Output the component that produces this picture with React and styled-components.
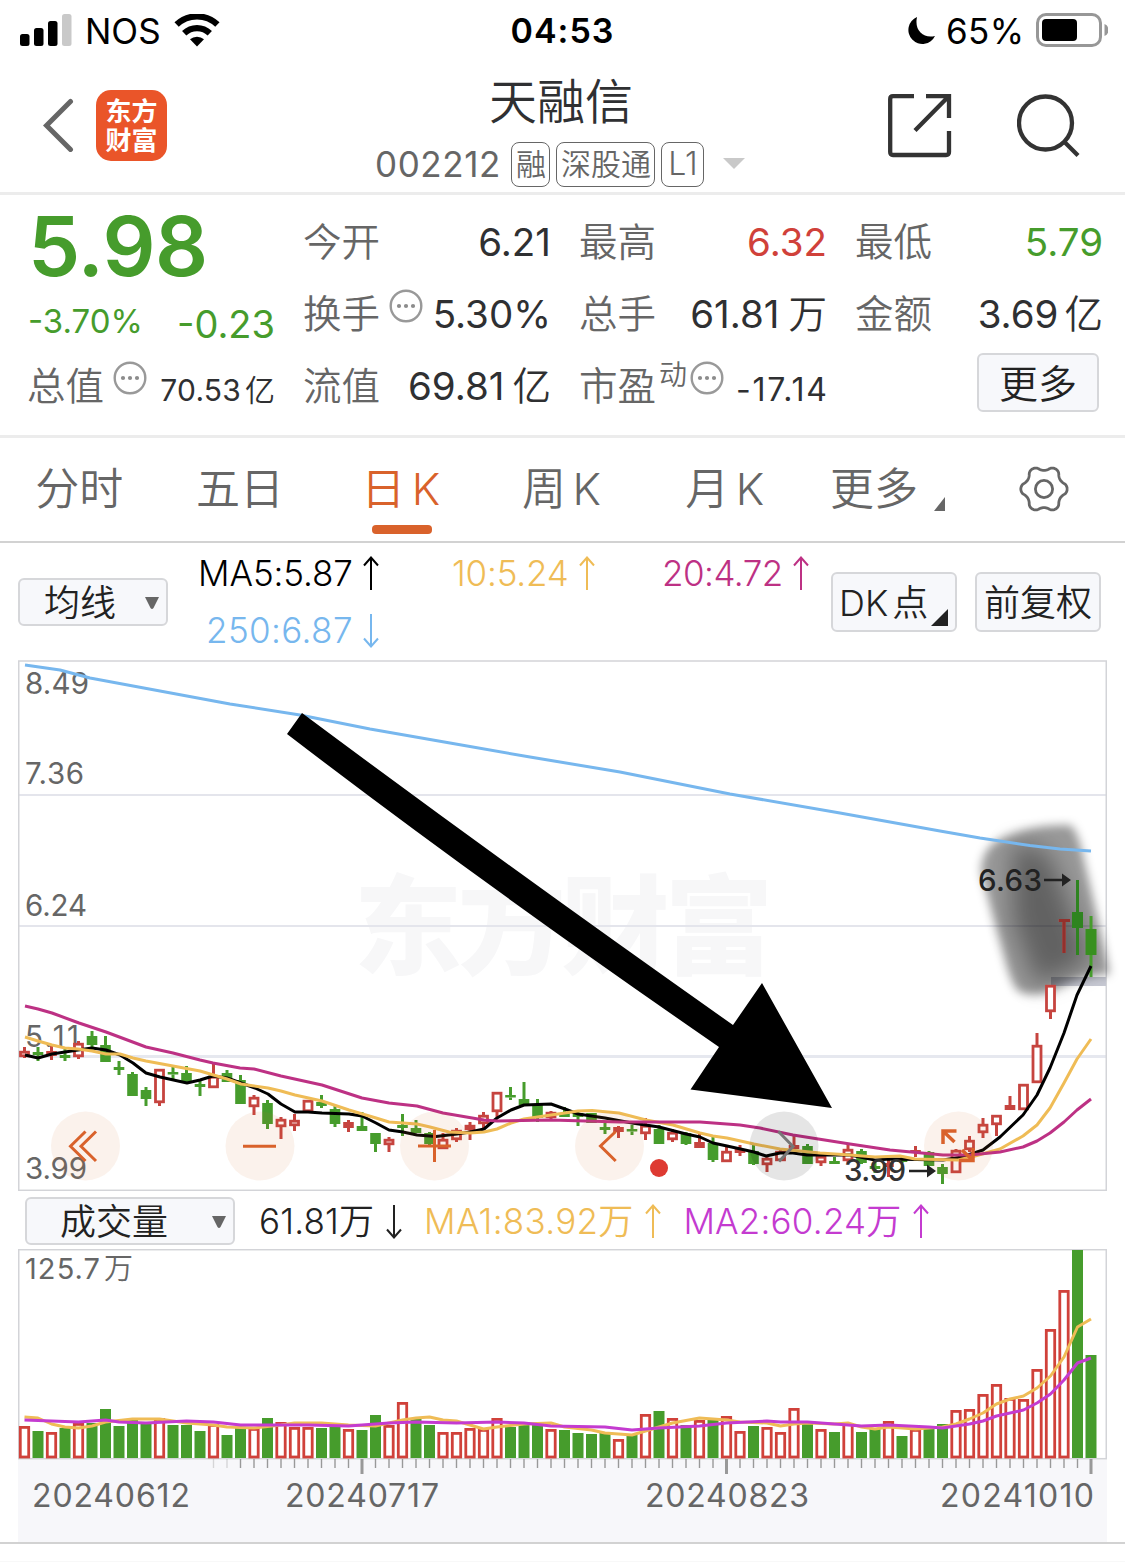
import React from 'react'
import styled, { createGlobalStyle, css } from 'styled-components'

const colors = {
  green: '#469c2c',
  red: '#d0413a',
  orange: '#d9622b',
  text: '#2f3032',
  label: '#666',
  yellow: '#efbc56',
  magenta: '#bd3184',
  purple: '#c43bd0',
  blue: '#77b7ee',
  line: '#ececec',
  border: '#d6d7da',
  panel: '#f7f8fb',
}

const GlobalStyle = createGlobalStyle`
  * { box-sizing: border-box; }
  body {
    margin: 0;
    background: #fff;
    color: ${colors.text};
    font-family: Inter, 'Noto Sans CJK SC', sans-serif;
    font-weight: 400;
  }
  svg { display: block; }
`

const Page = styled.div`
  width: 1125px;
  height: 1562px;
  overflow: hidden;
  background: #fff;
`

const Txt = styled.span`
  display: inline-block;
  white-space: nowrap;
  line-height: 1;
  font-size: ${props => props.$size}px;
  font-weight: ${props => props.$weight || 400};
  color: ${props => props.$color || 'inherit'};
  letter-spacing: ${props => props.$track || 0}px;
  margin-top: ${props => props.$drop || 0}px;
  margin-right: ${props => -(props.$track || 0)}px;
`

const Unit = styled.span`
  margin-left: ${props => props.$gap}px;
  font-weight: 350;
`

/* status bar */

const StatusBar = styled.div`
  display: grid;
  grid-template-columns: 1fr auto 1fr;
  align-items: center;
  height: 62px;
  padding: 0 17px 0 20px;
  color: #000;
`

const StatusSide = styled.div`
  display: flex;
  align-items: center;
  gap: ${props => (props.$end ? 10 : 13)}px;
  justify-content: ${props => (props.$end ? 'flex-end' : 'flex-start')};
`

const Clock = styled(Txt)`
  padding-right: 4px;
`

/* header */

const Header = styled.header`
  display: grid;
  grid-template-columns: 375px 1fr 375px;
  height: 133px;
  border-bottom: 3px solid ${colors.line};
`

const HeaderSide = styled.div`
  display: flex;
  align-items: center;
  height: ${props => (props.$end ? 127 : 126)}px;
  padding: ${props => (props.$end ? '0 45px 0 0' : '0 0 0 43px')};
  justify-content: ${props => (props.$end ? 'flex-end' : 'flex-start')};
  gap: ${props => (props.$end ? 65 : 22)}px;
`

const Logo = styled.div`
  width: 71px;
  height: 71px;
  padding-top: 7px;
  border-radius: 15px;
  background: #ea5529;
  color: #fff;
  font-size: 26px;
  font-weight: 700;
  line-height: 29px;
  text-align: center;
`

const TitleBlock = styled.div`
  display: flex;
  flex-direction: column;
  align-items: flex-start;
`

const Title = styled.h1`
  margin: 13px 0 0 114px;
  font-size: 48px;
  line-height: 54px;
  font-weight: 350;
`

const SubTitle = styled.div`
  display: flex;
  align-items: center;
  margin-top: 12px;
  height: 46px;
  color: ${colors.label};
`

const Tags = styled.div`
  display: flex;
  gap: 6px;
  margin: 0 19px 0 11px;
`

const Tag = styled.span`
  display: flex;
  align-items: center;
  justify-content: center;
  width: ${props => props.$w}px;
  height: 45px;
  border: 1.5px solid #666;
  border-radius: 8px;
  font-size: ${props => props.$size || 30}px;
  font-weight: 350;
  line-height: 1;
  white-space: nowrap;
`

/* quote */

const Quote = styled.section`
  display: grid;
  grid-template-columns: repeat(4, 247px);
  grid-template-rows: repeat(3, 72px);
  column-gap: 29px;
  height: 243px;
  padding: 11px 0 0 28px;
  border-bottom: 3px solid ${colors.line};
`

const Cell = styled.div`
  display: flex;
  align-items: center;
  justify-content: space-between;
  height: 72px;
`

const MoreCell = styled(Cell)`
  justify-content: flex-end;
  padding: 0 4px 8px 0;
`

const Label = styled.span`
  display: flex;
  align-items: center;
  margin-left: -1px;
  color: ${colors.label};
  font-size: 38.5px;
  font-weight: 350;
  line-height: 1;
  white-space: nowrap;
`

const Super = styled.span`
  margin: -22px 0 0 3px;
  font-size: 28px;
`

const DotsWrap = styled.span`
  margin: -16px 0 0 ${props => props.$gap}px;
`

const Button = styled.button`
  display: flex;
  align-items: center;
  justify-content: center;
  width: ${props => props.$w}px;
  height: ${props => props.$h}px;
  padding: 2px 0 0;
  border: 2px solid ${colors.border};
  border-radius: 6px;
  background: ${colors.panel};
  color: #222;
  font: 350 ${props => props.$size || 37}px/1 Inter, 'Noto Sans CJK SC', sans-serif;
  white-space: nowrap;
`

/* tabs */

const Tabs = styled.nav`
  display: grid;
  grid-template-columns: repeat(7, 1fr);
  height: 105px;
  border-bottom: 2px solid #d2d2d2;
`

const Tab = styled.div`
  position: relative;
  display: flex;
  align-items: center;
  justify-content: center;
  padding: 0 ${props => (props.$shift ? 0 : 2)}px 1px ${props => props.$shift || 0}px;
  color: ${colors.label};
  font-size: 44px;
  font-weight: 350;
  line-height: 1;
  white-space: nowrap;
  word-spacing: -6px;

  ${props => props.$active && css`
    color: ${colors.orange};

    &:after {
      content: '';
      position: absolute;
      left: 50%;
      bottom: 7px;
      width: 60px;
      height: 9px;
      margin-left: -30px;
      border-radius: 4px;
      background: ${colors.orange};
    }
  `}
`

/* indicator rows */

const IndicatorRow = styled.div`
  display: flex;
  height: 117px;
  padding: 0 24px 0 18px;
`

const Averages = styled.div`
  display: grid;
  grid-template-columns: 254px 210px 169px;
  grid-template-rows: 57px 57px;
  width: 633px;
  margin: 2px 0 0 30px;
`

const Average = styled.div`
  display: flex;
  align-items: center;
  gap: 10px;
  padding-left: ${props => props.$indent || 0}px;
  color: ${props => props.$color};
`

const Select = styled(Button)`
  justify-content: space-between;
  padding: 2px ${props => props.$right}px 0 ${props => props.$left}px;
  margin-top: ${props => props.$top}px;
`

const ButtonPair = styled.div`
  display: flex;
  gap: 18px;
  margin-top: 29px;
`

const DkButton = styled(Button)`
  position: relative;
  justify-content: flex-start;
  padding-left: 6px;
  word-spacing: -6px;

  &:after {
    content: '';
    position: absolute;
    right: 7px;
    bottom: 4px;
    border-style: solid;
    border-width: 0 0 17px 17px;
    border-color: transparent transparent #222 transparent;
  }
`

const VolumeRow = styled.div`
  display: flex;
  align-items: center;
  height: 58px;
  padding-left: 25px;
`

const VolumeItem = styled(Average)`
  margin: 2px 0 0 ${props => props.$ml}px;
  gap: 12px;
`

const Footer = styled.div`
  height: 20px;
  border-top: 2px solid #d2d2d2;
  border-bottom: 1px solid #f8f8f8;
`

/* icons */

const Dots = ({ gap }) => (
  <DotsWrap $gap={gap}>
    <svg width="34" height="34" viewBox="0 0 34 34">
      <circle cx="17" cy="17" r="15.3" fill="none" stroke="#999" strokeWidth="2.4" />
      {[10, 17, 24].map(x => <circle key={x} cx={x} cy="17" r="2.1" fill="#8c8c8c" />)}
    </svg>
  </DotsWrap>
)

const Arrow = ({ down }) => (
  <svg width="16" height="35" viewBox="0 0 16 35" fill="none" stroke="currentColor" strokeWidth="2">
    <path d={down ? 'M8 1v32M1 25.500l7 8 7-8' : 'M8 34V2M1 9.500l7-8 7 8'} />
  </svg>
)

const Caret = () => (
  <svg width="14" height="12" viewBox="0 0 14 12"><path d="M0 0h14L8.500 11q-1.500 2-3 0z" fill="#666" /></svg>
)

const gearPath = Array.from({ length: 121 }, (_, i) => {
  const a = (i * Math.PI) / 60
  const wave = Math.cos(6 * a)
  const r = 20.9 + 2.3 * Math.sign(wave) * Math.pow(Math.abs(wave), 0.75)
  return `${i ? 'L' : 'M'}${(26 + r * Math.cos(a)).toFixed(2)} ${(26 + r * Math.sin(a)).toFixed(2)}`
}).join('')

const Gear = () => (
  <svg width="52" height="52" viewBox="0 0 52 52" fill="none" stroke="#666" strokeWidth="2.8">
    <path d={gearPath} strokeLinejoin="round" />
    <circle cx="26" cy="26" r="8.600" />
  </svg>
)

const Signal = () => (
  <svg width="52" height="34" viewBox="0 0 52 34">
    <rect x="0" y="20" width="9.500" height="12" rx="2.5" />
    <rect x="14" y="14" width="9.500" height="18" rx="2.5" />
    <rect x="28" y="7" width="9.500" height="25" rx="2.5" />
    <rect x="42" y="0" width="9.500" height="32" rx="2.5" fill="#c9c9c9" />
  </svg>
)

const Wifi = () => (
  <svg width="46" height="34" viewBox="0 0 46 34" fill="none" stroke="#000" strokeWidth="6.200">
    <path d="M2.600 10.600a29.500 29.500 0 0 1 40.800 0" />
    <path d="M10.200 19.200a18.500 18.500 0 0 1 25.600 0" />
    <path d="M23 32.500l-7-7.200a10.500 10.500 0 0 1 14 0z" fill="#000" stroke="none" />
  </svg>
)

const Battery = () => (
  <svg width="74" height="36" viewBox="0 0 74 36">
    <rect x="3.500" y="1.500" width="63" height="31" rx="8.500" fill="none" stroke="#979797" strokeWidth="3" />
    <rect x="8" y="6" width="35" height="22" rx="4" />
    <path d="M70.500 11q4 1.500 4 6t-4 6z" fill="#979797" />
  </svg>
)

/* chart data: [high, body top, body bottom, low, type], r = hollow, s = solid red, g = green */

const candles = [
  [1047, 1051, 1057, 1058, 'r'], [1047, 1052, 1055, 1061, 'g'], [1046, 1051, 1056, 1060, 's'], [1047, 1055, 1058, 1061, 'g'],
  [1041, 1043, 1057, 1059, 'r'], [1031, 1036, 1045, 1047, 'g'], [1036, 1045, 1062, 1062, 'g'], [1061, 1067, 1070, 1075, 'g'],
  [1072, 1074, 1096, 1096, 'g'], [1087, 1090, 1099, 1106, 'g'], [1069, 1069, 1103, 1106, 'r'], [1065, 1072, 1074.5, 1079, 'g'],
  [1066, 1073, 1083, 1083, 'g'], [1081, 1084, 1087, 1096, 'g'], [1064, 1076, 1088, 1088, 'r'], [1070, 1073, 1082, 1082, 'g'],
  [1075, 1080, 1104, 1104, 'g'], [1095, 1097, 1107, 1115, 'r'], [1100, 1103, 1124, 1129, 'g'], [1117, 1119, 1127, 1139, 'r'],
  [1114, 1120, 1126, 1131, 'r'], [1100, 1100, 1112, 1112, 'r'], [1095, 1102, 1106, 1108, 'g'], [1106, 1109, 1124, 1127, 'g'],
  [1120, 1122, 1128, 1132, 's'], [1112, 1126, 1131, 1131, 'g'], [1133, 1133, 1144, 1152, 'g'], [1137, 1139, 1145, 1152, 'r'],
  [1114, 1125, 1128, 1136, 'g'], [1120, 1128, 1133, 1133, 'g'], [1132, 1133, 1144, 1145, 'g'], [1133, 1139, 1149, 1149, 'r'],
  [1128, 1130, 1140, 1142, 'r'], [1122, 1125, 1130, 1140, 'r'], [1112, 1115, 1124, 1130, 'r'], [1092, 1092, 1112, 1117, 'r'],
  [1087, 1095, 1097.5, 1100, 'g'], [1082, 1099, 1105, 1105, 'g'], [1099, 1105, 1118, 1122, 'g'], [1111, 1112, 1118, 1120, 'r'],
  [1107, 1113, 1117, 1117, 'g'], [1112, 1113, 1117, 1126, 'g'], [1113, 1113, 1123, 1123, 'g'], [1123, 1127, 1130, 1134, 'g'],
  [1126, 1127, 1132, 1138, 's'], [1125, 1129, 1131.5, 1135, 'g'], [1118, 1125, 1134, 1140, 'r'], [1125, 1129, 1144, 1144, 'g'],
  [1129, 1132, 1140, 1142, 'r'], [1132, 1133, 1144, 1145, 'g'], [1133, 1142, 1148, 1148, 's'], [1136, 1143, 1160, 1162, 'g'],
  [1145, 1151, 1162, 1162, 'r'], [1145, 1149, 1153, 1156, 's'], [1145, 1151, 1164, 1165, 'g'], [1156, 1158, 1165, 1172, 'r'],
  [1150, 1151, 1161, 1161, 'r'], [1136, 1145, 1149, 1149, 's'], [1144, 1146, 1164, 1164, 'g'], [1154, 1156, 1163, 1166, 'r'],
  [1157, 1161, 1164, 1164, 'g'], [1144, 1149, 1161, 1163, 'r'], [1149, 1151, 1163, 1164, 'g'], [1162, 1166, 1169, 1173, 'g'],
  [1158, 1163, 1167, 1177, 's'], [1157, 1158, 1162, 1163, 'g'], [1146, 1150, 1153, 1157, 's'], [1151, 1152, 1166, 1166, 'g'],
  [1164, 1167, 1174, 1184, 'g'], [1149, 1150, 1173, 1173, 'r'], [1136, 1140, 1150, 1152, 'r'], [1118, 1124, 1133, 1138, 'r'],
  [1115, 1115, 1125, 1136, 'r'], [1096, 1105, 1110, 1110, 's'], [1084, 1084, 1110, 1110, 'r'], [1033, 1045, 1083, 1083, 'r'],
  [985, 985, 1012, 1019, 'r'], [919, 919, 922, 953, 's'], [880, 912, 928, 955, 'g'], [916, 929, 955, 977, 'g'],
]

const volumes = [
  1426, 1431, 1432, 1428, 1423, 1423, 1409, 1426, 1419, 1423, 1418, 1425, 1425, 1431, 1424, 1435, 1428, 1428, 1418, 1422,
  1427, 1427, 1428, 1427, 1429, 1430, 1415, 1425, 1402, 1419, 1425, 1432, 1432, 1428, 1429, 1418, 1427, 1425, 1425, 1429,
  1430, 1433, 1434, 1433, 1439, 1435, 1414, 1411, 1418, 1425, 1420, 1420, 1416, 1431, 1426, 1427, 1432, 1408, 1424, 1429,
  1432, 1423, 1432, 1429, 1421, 1436, 1429, 1429, 1424, 1410, 1409, 1394, 1384, 1398, 1399, 1369, 1329, 1290, 1250, 1355,
]

// day 28 closed above its previous close, so its volume is red under a green candle
const isDown = i => candles[i][4] === 'g' && i !== 28

const ma5 = '25,1055 38,1058 52,1054 78,1050 92,1048 106,1050 120,1055 133,1063 146,1073 160,1077 187,1083 200,1080 213,1076 227,1078 241,1083 255,1088 268,1094 281,1104 295,1112 308,1112 322,1113 349,1114 362,1116 376,1123 389,1130 403,1132 417,1135 436,1136.5 457,1134 470,1132 484,1129 497,1118 511,1110 524,1105 551,1104 565,1109 578,1114 605,1118 632,1123 659,1127 686,1134 700,1137 713,1143 727,1146 754,1152 766,1156 780,1153 793,1153 807,1155 850,1155 875,1160 890,1159 943,1160 962,1157 983,1150 1000,1137 1023,1115 1037,1095 1050,1068 1064,1033 1077,995 1091,966'
const ma10 = '25,1037 38,1041 52,1045 65,1048 78,1049 92,1051 106,1054 120,1054 133,1058 146,1061 173,1066 200,1071 227,1079 241,1084 268,1088 281,1091 295,1095 322,1101 349,1110 376,1118 389,1122 417,1124 430,1127 449,1132 470,1133 484,1132 497,1129 511,1123 524,1119 551,1115 565,1113 578,1111 592,1110.5 619,1113 646,1120 673,1125 700,1133 713,1136 727,1138 754,1144 780,1149 820,1153 850,1155 875,1157 900,1156 915,1159 958,1160 975,1156 1000,1149 1023,1136 1037,1125 1050,1108 1064,1083 1077,1059 1091,1039'
const ma20 = '25,1006 38,1009 52,1013 79,1023 106,1032 146,1047 173,1053 200,1060 213,1063 240,1068 254,1069 281,1076 322,1085 362,1098 389,1103 417,1106 443,1113 484,1120 497,1121 551,1120 620,1122 700,1122 740,1125 760,1128 793,1135 850,1144 890,1150 943,1155 970,1155 1000,1152 1023,1147 1037,1141 1050,1133 1064,1122 1077,1110 1091,1099'
const ma250 = '25,665 60,670 90,678 160,691 230,704 300,715 370,729 450,743 530,757 620,772 730,794 840,813 940,831 980,838 1030,845.500 1060,849 1091,851'

// volume averages as [index, y]
const vma1 = [[0, 1417], [1, 1418], [2, 1424], [3, 1427], [4, 1428], [5, 1426], [6, 1422], [8, 1419], [10, 1419], [12, 1423], [14, 1425], [15, 1427], [17, 1428], [19, 1425], [20, 1423], [22, 1423], [24, 1425], [26, 1426], [27, 1423], [28, 1420], [29, 1418], [30, 1417], [31, 1420], [32, 1421], [33, 1425], [34, 1429], [35, 1427], [37, 1424], [39, 1423], [40, 1427], [42, 1430], [43, 1433], [45, 1435], [46, 1431], [47, 1427], [48, 1423], [50, 1418], [52, 1420], [53, 1422], [55, 1423], [56, 1426], [57, 1424], [58, 1423], [60, 1424], [61, 1423], [62, 1427], [63, 1429], [64, 1427], [66, 1429], [68, 1427], [69, 1424], [70, 1419], [71, 1413], [72, 1404], [73, 1399], [74, 1396], [75, 1388], [76, 1376], [77, 1357], [78, 1327], [79, 1319]]
const vma2 = [[0, 1420], [2, 1421], [4, 1422], [6, 1420], [7, 1422], [9, 1423], [12, 1421], [14, 1422], [16, 1425], [21, 1425], [24, 1426], [27, 1423], [29, 1422], [32, 1423], [35, 1422], [37, 1423], [39, 1426], [43, 1427], [45, 1430], [47, 1428], [50, 1426], [52, 1423], [55, 1421], [56, 1422], [58, 1422], [60, 1424], [62, 1426], [64, 1425], [67, 1427], [68, 1428], [70, 1424], [71, 1421], [72, 1416], [74, 1410], [75, 1403], [76, 1394], [77, 1380], [78, 1363], [79, 1358]]

const px = i => 24.5 + 13.5 * i
const toPoints = list => list.map(([i, y]) => `${px(i)},${y}`).join(' ')

const Candle = ({ x, data: [hi, top, bottom, lo, type] }) => {
  const color = type === 'g' ? colors.green : '#c6443f'
  return (
    <g>
      <path d={`M${x} ${hi}V${top}M${x} ${bottom}V${lo}`} stroke={color} strokeWidth="3" />
      {type === 'r'
        ? <rect x={x - 4} y={top + 1.2} width="8" height={bottom - top - 2.4} fill="#fff" stroke={color} strokeWidth="2.8" />
        : <rect x={x - 5.3} y={top} width="10.600" height={bottom - top} fill={color} />}
    </g>
  )
}

const ChartText = ({ x, y, w, size = 29.5, fill = '#666', weight = 400, children }) => (
  <text x={x} y={y} textLength={w} fontSize={size} fill={fill} fontWeight={weight}>{children}</text>
)

const PriceChart = () => (
  <svg width="1125" height="531" viewBox="0 660 1125 531">
    <defs>
      <filter id="soft" x="-30%" y="-30%" width="160%" height="160%"><feGaussianBlur stdDeviation="5" /></filter>
      <filter id="softer" x="-60%" y="-60%" width="220%" height="220%"><feGaussianBlur stdDeviation="12" /></filter>
    </defs>
    <text x="354" y="966" textLength="419" fontSize="108" fontWeight="900" fill="#f7f7f8">东方财富</text>
    <path d="M19 795H1106M19 926H1106" stroke="#e4e5ec" strokeWidth="2" />
    <path d="M19 1056.500H1106" stroke="#e6e8ef" strokeWidth="3" />
    <rect x="18.750" y="661" width="1087.500" height="529.300" fill="none" stroke="#d3d4d8" strokeWidth="1.500" />
    <rect x="1051" y="977" width="55" height="9" fill="#c6c8d2" />

    <ChartText x="25" y="694" w="64">8.49</ChartText>
    <ChartText x="25" y="784" w="59">7.36</ChartText>
    <ChartText x="25" y="916" w="62">6.24</ChartText>
    <ChartText x="25" y="1047" w="54">5.11</ChartText>
    <ChartText x="25" y="1179" w="62">3.99</ChartText>

    <g filter="url(#soft)">
      <path d="M981 872Q981 848 1002 838Q1032 824 1070 825Q1078 830 1084 860Q1096 910 1110 974Q1078 976 1054 990Q1034 998 1020 992Q1012 988 1004 956Q990 906 981 872Z" fill="#000" opacity=".4" />
    </g>
    <g filter="url(#softer)">
      <path d="M1012 846Q1036 842 1050 856L1068 900L1090 962L1036 986L1012 920Z" fill="#000" opacity=".36" />
    </g>

    {candles.map((c, i) => <Candle key={i} x={px(i)} data={c} />)}
    <path d="M1064 919V953M1059 920.500H1070" stroke="#93302c" strokeWidth="3" />
    <path d="M1077.500 880V955" stroke="#2f8420" strokeWidth="3" />
    <rect x="1072" y="912" width="11" height="16" fill="#2f8420" />
    <rect x="1085.700" y="929" width="10.600" height="26" fill="#38901f" />

    <g fill="none" strokeWidth="3" strokeLinejoin="round">
      <polyline points={ma250} stroke={colors.blue} />
      <polyline points={ma5} stroke="#000" />
      <polyline points={ma10} stroke={colors.yellow} />
      <polyline points={ma20} stroke={colors.magenta} />
    </g>

    {[85.5, 260, 434.5, 609.5, 958.5].map(x => (
      <circle key={x} cx={x} cy="1146" r="34.500" fill="#cf6c2c" opacity=".09" />
    ))}
    <circle cx="784" cy="1146" r="34.500" fill="#000" opacity=".1" />
    <g fill="none" stroke={colors.orange} strokeWidth="3">
      <path d="M85.500 1131.500L70.500 1146.300L85.500 1161M96 1131.500L81 1146.300L96 1161" />
      <path d="M243 1146.300H276" />
      <path d="M418 1146H451M434.500 1130V1162" />
      <path d="M615.700 1131.500L600.500 1146L615.700 1161" />
      <path d="M956.500 1131H943V1144M943 1131L954.500 1142M959 1160.500H973V1148M973 1160.500L962 1150" strokeWidth="3.500" />
    </g>
    <path d="M778.500 1131.500L793 1146.500L779 1161.500" fill="none" stroke="#777" strokeWidth="3" />
    <circle cx="659" cy="1168" r="9" fill="#de3a32" />

    <ChartText x="978" y="891" w="64" fill="#222" weight="500">6.63</ChartText>
    <ChartText x="844" y="1181" w="62" fill="#333" weight="500">3.99</ChartText>
    <path d="M1044 880H1066M909 1171H931" stroke="#222" strokeWidth="2.600" />
    <path d="M1062 873.500L1071 880L1062 886.500ZM927 1164.500L936 1171L927 1177.500Z" fill="#222" />

    <path d="M302 713Q510 868 733 1025L762 983L832 1108L690.500 1089.500L719 1047Q480 882 287 734Z" fill="#000" />
  </svg>
)

const VolumeChart = () => (
  <svg width="1125" height="293" viewBox="0 1249 1125 293">
    <rect x="18" y="1459" width="1089" height="83" fill="#f7f7fa" />
    <rect x="18.750" y="1249.700" width="1087.500" height="209" fill="#fff" stroke="#d3d4d8" strokeWidth="1.500" />
    <ChartText x="25" y="1279" w="75" size={29}>125.7</ChartText>
    <ChartText x="104" y="1279" w="29" size={29} weight={350}>万</ChartText>
    {volumes.map((y, i) => (isDown(i)
      ? <rect key={i} x={px(i) - 5.5} y={y} width="11" height={1458 - y} fill={colors.green} />
      : <rect key={i} x={px(i) - 4.2} y={y + 1.4} width="8.400" height={1455.6 - y} fill="#fff" stroke={colors.red} strokeWidth="2.800" />
    ))}
    <g fill="none" strokeWidth="3" strokeLinejoin="round">
      <polyline points={toPoints(vma1)} stroke={colors.yellow} />
      <polyline points={toPoints(vma2)} stroke={colors.purple} />
    </g>
    {volumes.map((_, i) => {
      if (i < 14) return null
      const major = i === 25 || i === 52 || i === 79
      return (
        <path
          key={i}
          d={`M${px(i)} 1459V${major ? 1474 : 1468}`}
          stroke="#999"
          strokeWidth={major ? 3 : 1.4}
          opacity={i < 16 ? 0.35 : 1}
        />
      )
    })}
    <ChartText x="32" y="1506.500" w="158" size={32}>20240612</ChartText>
    <ChartText x="285" y="1506.500" w="154" size={32}>20240717</ChartText>
    <ChartText x="645" y="1506.500" w="164" size={32}>20240823</ChartText>
    <ChartText x="940" y="1506.500" w="154" size={32}>20241010</ChartText>
  </svg>
)

const Stat = ({ label, value, unit, color, extra, size = 38.5, track = 0, drop = 0, gap = 6 }) => (
  <Cell>
    <Label>{label}{extra}</Label>
    <Txt $size={size} $color={color} $track={track} $drop={drop}>
      {value}{unit && <Unit $gap={gap}>{unit}</Unit>}
    </Txt>
  </Cell>
)

const App = () => (
  <Page>
    <GlobalStyle />
    <StatusBar>
      <StatusSide>
        <Signal />
        <Txt $size={35}>NOS</Txt>
        <Wifi />
      </StatusSide>
      <Clock $size={34} $weight={600} $track={1}>04:53</Clock>
      <StatusSide $end>
        <svg width="30" height="30" viewBox="0 0 30 30">
          <path d="M11 1A14 14 0 1 0 29 20Q20 22 14.500 16.500T11 1Z" />
        </svg>
        <Txt $size={35} $track={0.3}>65%</Txt>
        <Battery />
      </StatusSide>
    </StatusBar>

    <Header>
      <HeaderSide>
        <svg width="31" height="54" viewBox="0 0 31 54" fill="none" stroke="#666" strokeWidth="5">
          <path d="M27.500 3.500L3.500 27.500L27.500 51.500" strokeLinecap="round" />
        </svg>
        <Logo>东方<br />财富</Logo>
      </HeaderSide>
      <TitleBlock>
        <Title>天融信</Title>
        <SubTitle>
          <Txt $size={35} $track={0.6}>002212</Txt>
          <Tags>
            <Tag $w={39}>融</Tag>
            <Tag $w={99}>深股通</Tag>
            <Tag $w={43} $size={32}>L1</Tag>
          </Tags>
          <svg width="22" height="12" viewBox="0 0 22 12"><path d="M0 0h22L11 11z" fill="#c9c9c9" /></svg>
        </SubTitle>
      </TitleBlock>
      <HeaderSide $end>
        <svg width="64" height="64" viewBox="0 0 64 64" fill="none" stroke="#333" strokeWidth="4.300">
          <path d="M26 2.200H5Q2.200 2.200 2.200 5V58Q2.200 61 5 61H58Q61 61 61 58V37" />
          <path d="M38 2.200H61V24M60 3L27 36.500" />
        </svg>
        <svg width="63" height="64" viewBox="0 0 63 64" fill="none" stroke="#333" strokeWidth="4.300">
          <circle cx="28.500" cy="29" r="26.500" />
          <path d="M47.500 48L61 61.500" />
        </svg>
      </HeaderSide>
    </Header>

    <Quote>
      <Cell>
        <Txt $size={83} $weight={590} $color={colors.green} $track={-0.6} $drop={8}>5.98</Txt>
      </Cell>
      <Stat label="今开" value="6.21" />
      <Stat label="最高" value="6.32" color={colors.red} />
      <Stat label="最低" value="5.79" color={colors.green} />
      <Cell>
        <Txt $size={33} $color={colors.green} $drop={14}>-3.70%</Txt>
        <Txt $size={38} $color={colors.green} $drop={20}>-0.23</Txt>
      </Cell>
      <Stat label="换手" extra={<Dots gap={9} />} value="5.30%" />
      <Stat label="总手" value="61.81" unit="万" gap={9} />
      <Stat label="金额" value="3.69" unit="亿" />
      <Stat label="总值" extra={<Dots gap={9} />} value="70.53" unit="亿" size={30} track={0.2} gap={4} drop={7} />
      <Stat label="流值" value="69.81" unit="亿" gap={8} />
      <Stat label="市盈" extra={<><Super>动</Super><Dots gap={3} /></>} value="-17.14" size={32} track={1.8} drop={7} />
      <MoreCell>
        <Button $w={122} $h={59} $size={39}>更多</Button>
      </MoreCell>
    </Quote>

    <Tabs>
      <Tab>分时</Tab>
      <Tab>五日</Tab>
      <Tab $active>日 K</Tab>
      <Tab>周 K</Tab>
      <Tab $shift={3}>月 K</Tab>
      <Tab $shift={8}>
        更多
        <svg width="28" height="44" viewBox="0 0 28 44"><path d="M27 30V44H16Z" fill="#666" /></svg>
      </Tab>
      <Tab><Gear /></Tab>
    </Tabs>

    <IndicatorRow>
      <Select $w={150} $h={48} $size={36} $left={24} $right={7} $top={35}>均线<Caret /></Select>
      <Averages>
        <Average $color="#000"><Txt $size={35} $weight={350} $track={-0.1}>MA5:5.87</Txt><Arrow /></Average>
        <Average $color={colors.yellow}><Txt $size={35} $weight={350} $track={-0.2}>10:5.24</Txt><Arrow /></Average>
        <Average $color={colors.magenta}><Txt $size={35} $weight={350} $track={-0.5}>20:4.72</Txt><Arrow /></Average>
        <Average $color={colors.blue} $indent={8}><Txt $size={35} $weight={350} $track={0.4}>250:6.87</Txt><Arrow down /></Average>
      </Averages>
      <ButtonPair>
        <DkButton $w={126} $h={60} $size={36}>DK 点</DkButton>
        <Button $w={126} $h={60} $size={36}>前复权</Button>
      </ButtonPair>
    </IndicatorRow>

    <PriceChart />

    <VolumeRow>
      <Select $w={210} $h={48} $size={36} $left={33} $right={7} $top={2}>成交量<Caret /></Select>
      <VolumeItem $ml={24} $color="#222"><Txt $size={35} $weight={350} $track={0.2}>61.81万</Txt><Arrow down /></VolumeItem>
      <VolumeItem $ml={22} $color={colors.yellow}><Txt $size={35} $weight={350} $track={0.3}>MA1:83.92万</Txt><Arrow /></VolumeItem>
      <VolumeItem $ml={22} $color={colors.purple}><Txt $size={35} $weight={350} $track={0.2}>MA2:60.24万</Txt><Arrow /></VolumeItem>
    </VolumeRow>

    <VolumeChart />
    <Footer />
  </Page>
)

export default App
